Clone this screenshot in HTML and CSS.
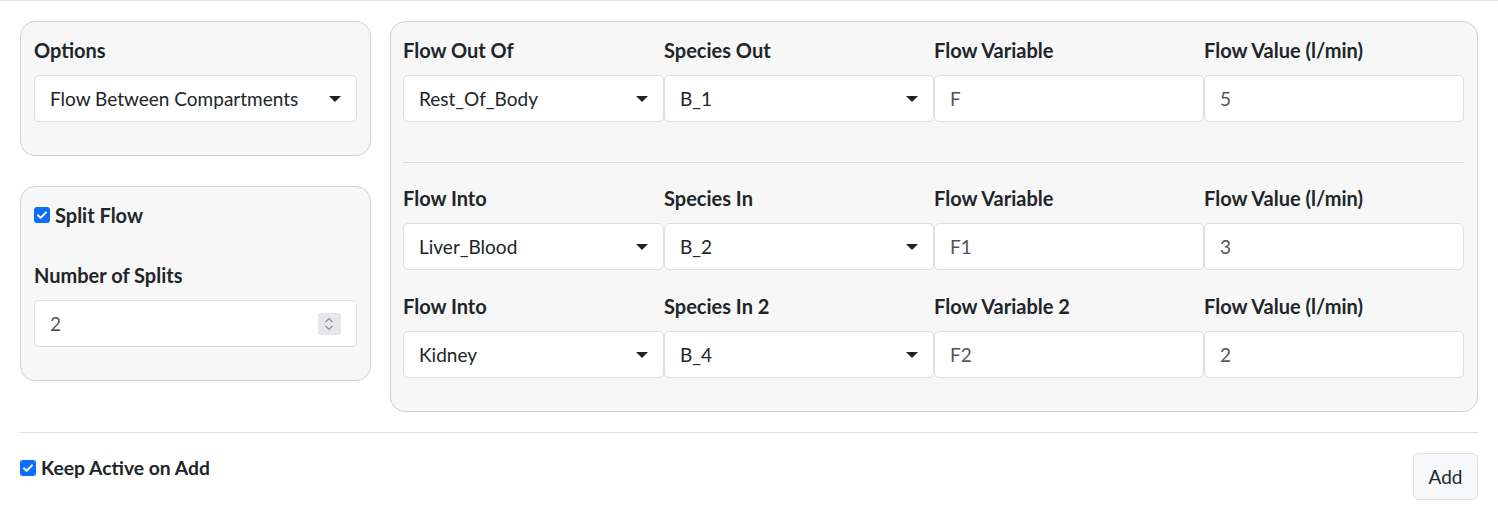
FILE: index.html
```html
<!DOCTYPE html>
<html>
<head>
<meta charset="utf-8">
<link rel="stylesheet" href="styles.css">
</head>
<body>
<div class="page">
  <div class="layout">
    <div class="left">
      <div class="panel">
        <div class="label">Options</div>
        <div class="field select"><span>Flow Between Compartments</span><i class="caret"></i></div>
      </div>
      <div class="panel">
        <div class="check"><span class="box"><svg viewBox="0 0 16 16" width="16" height="16"><path d="M4 8.3l2.6 2.6L12 5.4" fill="none" stroke="#fff" stroke-width="2" stroke-linecap="round" stroke-linejoin="round"/></svg></span><span>Split Flow</span></div>
        <div class="label gap-top">Number of Splits</div>
        <div class="field number"><span class="muted">2</span>
          <span class="spin"><svg viewBox="0 0 22 22" width="22" height="22"><path d="M7.5 9l3.5-3.5L14.5 9M7.5 13l3.5 3.5L14.5 13" fill="none" stroke="#8a8d91" stroke-width="1.2"/></svg></span>
        </div>
      </div>
    </div>
    <div class="panel right">
      <div class="grid">
        <div class="label">Flow Out Of</div>
        <div class="label">Species Out</div>
        <div class="label">Flow Variable</div>
        <div class="label">Flow Value (l/min)</div>
        <div class="field select"><span>Rest_Of_Body</span><i class="caret"></i></div>
        <div class="field select"><span>B_1</span><i class="caret"></i></div>
        <div class="field"><span class="muted">F</span></div>
        <div class="field"><span class="muted">5</span></div>
      </div>
      <div class="divider"></div>
      <div class="grid">
        <div class="label">Flow Into</div>
        <div class="label">Species In</div>
        <div class="label">Flow Variable</div>
        <div class="label">Flow Value (l/min)</div>
        <div class="field select"><span>Liver_Blood</span><i class="caret"></i></div>
        <div class="field select"><span>B_2</span><i class="caret"></i></div>
        <div class="field"><span class="muted">F1</span></div>
        <div class="field"><span class="muted">3</span></div>
      </div>
      <div class="grid row-gap">
        <div class="label">Flow Into</div>
        <div class="label">Species In 2</div>
        <div class="label">Flow Variable 2</div>
        <div class="label">Flow Value (l/min)</div>
        <div class="field select"><span>Kidney</span><i class="caret"></i></div>
        <div class="field select"><span>B_4</span><i class="caret"></i></div>
        <div class="field"><span class="muted">F2</span></div>
        <div class="field"><span class="muted">2</span></div>
      </div>
    </div>
  </div>
  <div class="hr"></div>
  <div class="bottom">
    <div class="check keep"><span class="box"><svg viewBox="0 0 16 16" width="16" height="16"><path d="M4 8.3l2.6 2.6L12 5.4" fill="none" stroke="#fff" stroke-width="2" stroke-linecap="round" stroke-linejoin="round"/></svg></span><span>Keep Active on Add</span></div>
    <button class="btn">Add</button>
  </div>
</div>
</body>
</html>
```
FILE: styles.css
```css
* { box-sizing: border-box; }
body {
  margin: 0;
  font-family: Lato, "Liberation Sans", sans-serif;
  font-size: 19px;
  color: #212529;
  background: #fff;
}
.page {
  border-top: 1px solid #e6e6e6;
  padding: 20px 20px 0;
}
.layout {
  display: grid;
  grid-template-columns: 351px minmax(0, 1fr);
  column-gap: 19px;
  align-items: start;
}
.left {
  display: flex;
  flex-direction: column;
  gap: 30px;
}
.panel {
  background: #f7f7f7;
  border: 1px solid #cfd1d3;
  border-radius: 15px;
  padding: 16px 13px 33px;
}
.panel.right { padding-left: 12px; }
.label {
  font-weight: 700;
  font-size: 20px;
  line-height: 24px;
  margin-bottom: 13px;
}
.gap-top { margin-top: 36px; }
.field {
  height: 47px;
  background: #fff;
  border: 1px solid #dcdfe3;
  border-radius: 5px;
  display: flex;
  align-items: center;
  justify-content: space-between;
  padding: 0 15px 0 15px;
  line-height: 24px;
}
.muted { color: #4f565d; }
.caret {
  width: 0; height: 0;
  border-left: 6px solid transparent;
  border-right: 6px solid transparent;
  border-top: 6px solid #222;
}
.number { padding-right: 15px; }
.spin {
  width: 23px; height: 22px;
  background: #e8e8ec;
  border-radius: 2px;
  display: flex;
}
.check {
  display: flex;
  align-items: center;
  gap: 5px;
  font-weight: 700;
  font-size: 20px;
  line-height: 24px;
}
.keep span:last-child { font-size: 19.3px; }
.box {
  width: 16px; height: 16px;
  border-radius: 3px;
  background: #0d6efd;
  display: flex;
}
.grid {
  display: grid;
  grid-template-columns: 261px 270px 270px minmax(0, 1fr);
}
.grid .label { margin-bottom: 13px; }
.divider {
  height: 1px;
  background: #dedede;
  margin: 40px 0 23px;
}
.row-gap { margin-top: 24px; }
.hr {
  height: 1px;
  background: #dedede;
  margin-top: 20px;
}
.bottom {
  display: flex;
  justify-content: space-between;
  align-items: flex-start;
  padding-top: 20px;
}
.keep { margin-top: 3px; }
.btn {
  width: 65px; height: 47px;
  background: #f7f8f9;
  border: 1px solid #dcdfe3;
  border-radius: 6px;
  font-family: inherit;
  font-size: 19px;
  color: #212529;
  padding: 0;
}
```
